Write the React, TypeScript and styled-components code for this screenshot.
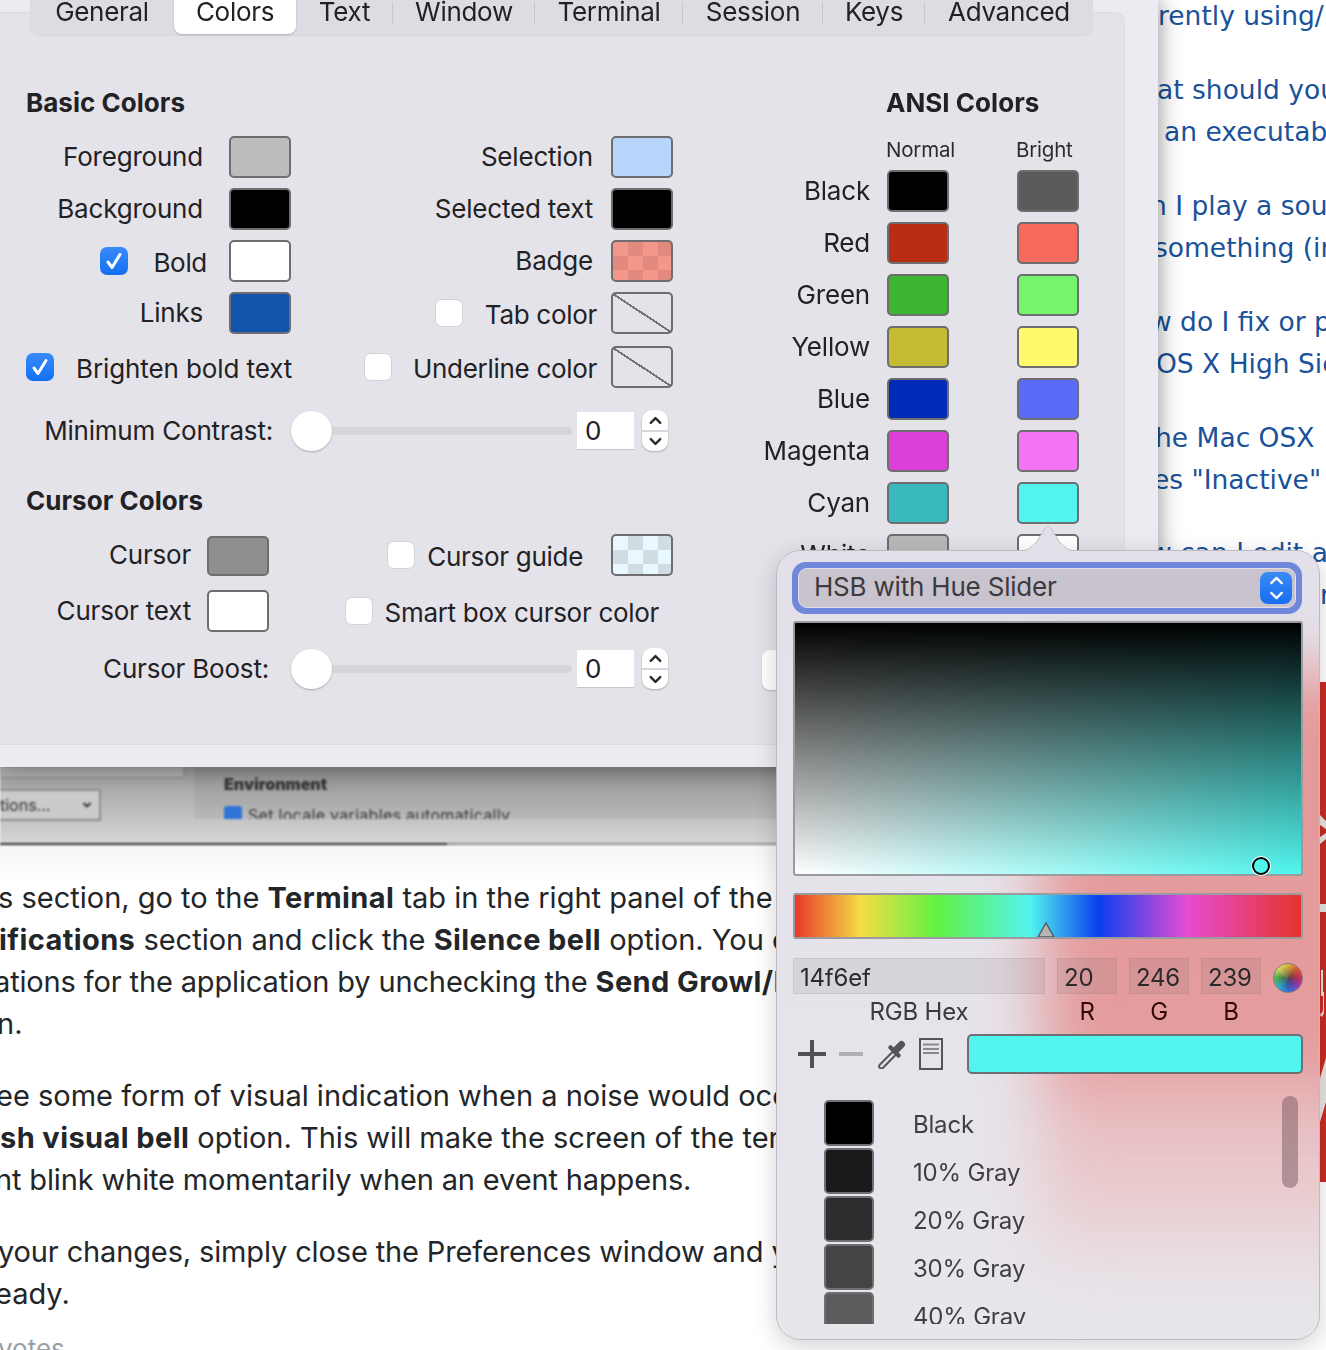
import React, { FC } from "react";
import styled, { createGlobalStyle } from "styled-components";
import { ChevronDown, ChevronUp } from "lucide-react";

const TABS = [
  { name: "General", width: 144 },
  { name: "Colors", width: 122 },
  { name: "Text", width: 97 },
  { name: "Window", width: 142 },
  { name: "Terminal", width: 148 },
  { name: "Session", width: 140 },
  { name: "Keys", width: 102 },
  { name: "Advanced", width: 168 },
];
const CHECKER_RED = "repeating-conic-gradient(#e28a7d 0 25%, #f4978a 0 50%) 0 0 / 30px 28px";
const CHECKER_ICE = "repeating-conic-gradient(#d0dde3 0 25%, #e9f8fe 0 50%) 0 0 / 30px 28px";
const NONE = "linear-gradient(to top right, transparent calc(50% - 1px), #747377 calc(50% - 1px), #747377 calc(50% + 1px), transparent calc(50% + 1px))";

const ANSI = [
  { name: "Black", normal: "#000000", bright: "#5a5a5a" },
  { name: "Red", normal: "#b92d17", bright: "#f76a5c" },
  { name: "Green", normal: "#3cb630", bright: "#76f56c" },
  { name: "Yellow", normal: "#c3bc34", bright: "#fffa6d" },
  { name: "Blue", normal: "#002bb9", bright: "#5a6cf7" },
  { name: "Magenta", normal: "#dc3fd8", bright: "#f572f2" },
  { name: "Cyan", normal: "#3ab9bd", bright: "#52f4ee" },
  { name: "White", normal: "#b9b9b9", bright: "#ffffff" },
];

const GRAYS = [
  { name: "Black", color: "#000000" },
  { name: "10% Gray", color: "#191919" },
  { name: "20% Gray", color: "#2d2d2d" },
  { name: "30% Gray", color: "#444444" },
  { name: "40% Gray", color: "#5c5c5c" },
];

const SIDE_LINKS = [
  { text: "rently using/", indent: 0, gap: 0 },
  { text: "at should you", indent: -1, gap: 32 },
  { text: "an executable", indent: 6, gap: 0 },
  { text: "n I play a sound", indent: -8, gap: 32 },
  { text: "something (in", indent: -4, gap: 0 },
  { text: "w do I fix or p", indent: -8, gap: 32 },
  { text: "OS X High Sierra", indent: -2, gap: 0 },
  { text: "he Mac OSX", indent: -3, gap: 32 },
  { text: "es \"Inactive\"", indent: -5, gap: 0 },
  { text: "w can I edit a", indent: -8, gap: 31 },
  { text: "r", indent: 162, gap: 0 },
];

const Check: FC<{ on?: boolean }> = ({ on }) => (
  <CheckBox $on={on}>
    {on && (
      <svg width="20" height="20" viewBox="0 0 20 20" fill="none">
        <path d="M4 11l4 5.500L16 3.500" stroke="#fff" strokeWidth="3" strokeLinecap="round" strokeLinejoin="round" />
      </svg>
    )}
  </CheckBox>
);

const Slider: FC<{ label: string; inset: number; top: number }> = ({ label, inset, top }) => (
  <SliderRow $top={top}>
    <SliderLabel $inset={inset}>{label}</SliderLabel>
    <SliderTrack>
      <SliderThumb />
    </SliderTrack>
    <NumberField>0</NumberField>
    <Stepper>
      <ChevronUp size={19} strokeWidth={3} color="#2a2a2c" />
      <StepperLine />
      <ChevronDown size={19} strokeWidth={3} color="#2a2a2c" />
    </Stepper>
  </SliderRow>
);

const App: FC = () => {
  return (
    <>
      <GlobalStyle />
      <Page>
        <Article>
          <ScreenStrip>
            <StripLeft>
              <StripBox />
              <StripSelect>
                tions...
                <ChevronDown size={12} strokeWidth={4} />
              </StripSelect>
            </StripLeft>
            <StripGroup>
              <strong>Environment</strong>
              <StripOption>
                <StripTick />
                Set locale variables automatically
              </StripOption>
            </StripGroup>
          </ScreenStrip>
          <Paragraph>
            <ArticleLine $indent={-2}>
              s section, go to the <b>Terminal</b> tab in the right panel of the window.
            </ArticleLine>
            <ArticleLine $indent={-1}>
              <b>ifications</b> section and click the <b>Silence bell</b> option. You can
            </ArticleLine>
            <ArticleLine $indent={-6} $tight>
              ations for the application by unchecking the <b>Send Growl/Notification</b>
            </ArticleLine>
            <ArticleLine $indent={-3}>n.</ArticleLine>
          </Paragraph>
          <Paragraph>
            <ArticleLine $indent={-4}>ee some form of visual indication when a noise would occur, select the</ArticleLine>
            <ArticleLine $indent={0}>
              <b>sh visual bell</b> option. This will make the screen of the terminal
            </ArticleLine>
            <ArticleLine $indent={-5} $tight>
              nt blink white momentarily when an event happens.
            </ArticleLine>
          </Paragraph>
          <Paragraph>
            <ArticleLine $indent={-2} $tight>
              your changes, simply close the Preferences window and your
            </ArticleLine>
            <ArticleLine $indent={-5}>eady.</ArticleLine>
          </Paragraph>
          <Votes>votes</Votes>
        </Article>

        <Sidebar>
          {SIDE_LINKS.map((l) => (
            <SideLink key={l.text} $indent={l.indent} $gap={l.gap}>
              {l.text}
            </SideLink>
          ))}
          <AdBanner>
            <svg width="6" height="500" viewBox="0 0 6 500">
              <path d="M0 133l6 6v8l-6-4zM0 155l6-4v6l-6 5zM0 222h6v8H0zM1 288h2v26H1zM0 333l3-4v-19h1v21l-2 4zM0 440l6-20v-44l-6 20z" fill="#e9e5e4" />
            </svg>
          </AdBanner>
        </Sidebar>

        <PrefsWindow>
          <Panel>
            <TabBar>
              {TABS.map((t, i) => (
                <Tab key={t.name} $width={t.width} $active={t.name === "Colors"} $sep={i >= 2 && i < 7}>
                  {t.name}
                </Tab>
              ))}
            </TabBar>
            <PanelBody>
              <LeftColumn>
                <SectionTitle>Basic Colors</SectionTitle>
                <ColorGrid>
                  <Cell>
                    <FieldLabel>Foreground</FieldLabel>
                    <Swatch $fill="#bcbcbc" />
                  </Cell>
                  <Cell>
                    <FieldLabel $gap={18}>Selection</FieldLabel>
                    <Swatch $fill="#b8d6fb" />
                  </Cell>
                  <Cell>
                    <FieldLabel>Background</FieldLabel>
                    <Swatch $fill="#000" />
                  </Cell>
                  <Cell>
                    <FieldLabel $gap={18}>Selected text</FieldLabel>
                    <Swatch $fill="#000" />
                  </Cell>
                  <Cell>
                    <Check on />
                    <FieldLabel $low $lead={25} $gap={22}>
                      Bold
                    </FieldLabel>
                    <Swatch $fill="#fff" />
                  </Cell>
                  <Cell>
                    <FieldLabel $gap={18}>Badge</FieldLabel>
                    <Swatch $fill={CHECKER_RED} />
                  </Cell>
                  <Cell>
                    <FieldLabel>Links</FieldLabel>
                    <Swatch $fill="#1254ab" />
                  </Cell>
                  <Cell>
                    <Check />
                    <FieldLabel $low $lead={22} $gap={14}>
                      Tab color
                    </FieldLabel>
                    <Swatch $fill={NONE} />
                  </Cell>
                  <LastCell $start>
                    <Check on />
                    <FieldLabel $low $loose $lead={22} $gap={0}>
                      Brighten bold text
                    </FieldLabel>
                  </LastCell>
                  <LastCell>
                    <Check />
                    <FieldLabel $low $lead={21} $gap={14}>
                      Underline color
                    </FieldLabel>
                    <Swatch $fill={NONE} />
                  </LastCell>
                </ColorGrid>
                <Slider label="Minimum Contrast:" inset={0} top={22} />
                <SectionTitle $top={35}>Cursor Colors</SectionTitle>
                <CursorGrid>
                  <Cell>
                    <FieldLabel $gap={16}>Cursor</FieldLabel>
                    <Swatch $fill="#8f8f8f" $short />
                  </Cell>
                  <Cell>
                    <Check />
                    <FieldLabel $low $lead={12} $gap={28}>
                      Cursor guide
                    </FieldLabel>
                    <Swatch $fill={CHECKER_ICE} />
                  </Cell>
                  <Cell>
                    <FieldLabel $gap={16}>Cursor text</FieldLabel>
                    <Swatch $fill="#fff" />
                  </Cell>
                  <Cell>
                    <Check />
                    <FieldLabel $low $lead={12} $gap={14}>
                      Smart box cursor color
                    </FieldLabel>
                  </Cell>
                </CursorGrid>
                <Slider label="Cursor Boost:" inset={4} top={16} />
              </LeftColumn>
              <AnsiColumn>
                <AnsiTitle>ANSI Colors</AnsiTitle>
                <AnsiHeaders>
                  <AnsiHeader>Normal</AnsiHeader>
                  <AnsiHeader>Bright</AnsiHeader>
                </AnsiHeaders>
                <AnsiGrid>
                  {ANSI.map((c) => (
                    <React.Fragment key={c.name}>
                      <AnsiLabel>{c.name}</AnsiLabel>
                      <Swatch $fill={c.normal} />
                      <Swatch $fill={c.bright} />
                    </React.Fragment>
                  ))}
                </AnsiGrid>
                <PresetsButton>Color Presets...</PresetsButton>
              </AnsiColumn>
            </PanelBody>
          </Panel>
        </PrefsWindow>

        <Picker>
          <PickerGlowClip>
            <PickerGlow />
          </PickerGlowClip>
          <PickerArrow width="58" height="27" viewBox="0 0 58 27">
            <path d="M0 26c12 0 16-7 22-16 3-5 5-9 7-9s4 4 7 9c6 9 10 16 22 16" fill="#e3e0e9" stroke="#bdbbc1" strokeWidth="1" />
            <rect x="0" y="26" width="58" height="1" fill="#e3e0e9" />
          </PickerArrow>
          <ModeRing>
            <ModeSelect>
              <ModeLabel>HSB with Hue Slider</ModeLabel>
              <ModeStepper>
                <ChevronUp size={21} strokeWidth={2.6} color="#fff" />
                <ChevronDown size={21} strokeWidth={2.6} color="#fff" />
              </ModeStepper>
            </ModeSelect>
          </ModeRing>
          <ColorField>
            <FieldCursor />
          </ColorField>
          <HueBar>
            <HueMark width="18" height="15" viewBox="0 0 18 15">
              <path d="M1 15L9 1l8 14z" fill="#b4b4b4" stroke="#58585a" strokeWidth="1.4" />
            </HueMark>
          </HueBar>
          <ValuesRow>
            <ValueColumn>
              <ValueBox>14f6ef</ValueBox>
              <ValueCaption>RGB Hex</ValueCaption>
            </ValueColumn>
            <ValueColumn>
              <ValueBox>20</ValueBox>
              <ValueCaption $tint>R</ValueCaption>
            </ValueColumn>
            <ValueColumn>
              <ValueBox>246</ValueBox>
              <ValueCaption $tint>G</ValueCaption>
            </ValueColumn>
            <ValueColumn>
              <ValueBox>239</ValueBox>
              <ValueCaption $tint>B</ValueCaption>
            </ValueColumn>
            <ColorWheel />
          </ValuesRow>
          <ToolsRow>
            <ToolIcons>
              <svg width="28" height="28" viewBox="0 0 28 28">
                <path d="M14 0v28M0 14h28" stroke="#515153" strokeWidth="4" />
              </svg>
              <svg width="24" height="28" viewBox="0 0 24 28">
                <path d="M0 14h24" stroke="#b0afb2" strokeWidth="4" />
              </svg>
              <svg width="30" height="30" viewBox="0 0 30 30" fill="none" strokeLinecap="round" stroke="#555557">
                <path d="M18 11.500L4 25.500c-1.500 1.500-1 2.800 0 3.500s2.300 .5 3.300-.5L20 15.500" strokeWidth="2" />
                <path d="M14.500 8.500L22.500 16.500" strokeWidth="4.500" />
                <path d="M19.500 11.500L25.500 5.500" strokeWidth="7" />
              </svg>
              <svg width="24" height="32" viewBox="0 0 24 32">
                <rect x="1" y="1" width="22" height="30" fill="none" stroke="#555557" strokeWidth="2" />
                <path d="M4 6.500h16M4 11h16M4 15h16" stroke="#8a898c" strokeWidth="2" />
              </svg>
            </ToolIcons>
            <CurrentColor />
          </ToolsRow>
          <PaletteList>
            {GRAYS.map((g) => (
              <PaletteRow key={g.name}>
                <PaletteChip $fill={g.color} />
                <PaletteName>{g.name}</PaletteName>
              </PaletteRow>
            ))}
          </PaletteList>
          <PaletteScroll />
        </Picker>
      </Page>
    </>
  );
};

export default App;

const GlobalStyle = createGlobalStyle`
  html, body {
    margin: 0;
    padding: 0;
    background: #fff;
    overflow: hidden;
  }
  #root {
    height: 1350px;
  }
`;

const Page = styled.div`
  position: relative;
  display: flex;
  width: 1326px;
  height: 1350px;
  overflow: hidden;
  background: #fff;
  font-family: Inter, "Liberation Sans", sans-serif;
`;

// ---- page behind the windows ----

const Article = styled.main`
  flex: 0 0 1158px;
  overflow: hidden;
  color: #232629;
  font-size: 29px;
  line-height: 42px;
  background: linear-gradient(#f6f6f6, #fff) 0 845px / 100% 40px no-repeat;

  b {
    letter-spacing: 0.4px;
  }
`;
const ScreenStrip = styled.div`
  display: flex;
  align-items: flex-start;
  gap: 10px;
  height: 845px;
  padding-top: 767px;
  box-sizing: border-box;
  background: linear-gradient(to bottom, #9a9a9a 767px, #d6d6d6 842px);
  border-bottom: 2px solid;
  border-image: linear-gradient(to right, #2a2a2a 447px, #8c8c8c 447px) 1;
  font-size: 16px;
  line-height: 20px;
  color: #333;
  filter: blur(0.9px);
`;
const StripLeft = styled.div`
  flex: 0 0 184px;
`;
const StripBox = styled.div`
  height: 10px;
  background: #b2b2b2;
  border: 1px solid #8c8c8c;
  border-top: none;
`;
const StripSelect = styled.div`
  display: flex;
  align-items: center;
  justify-content: space-between;
  box-sizing: border-box;
  width: 101px;
  height: 32px;
  margin-top: 11px;
  padding: 0 6px 0 0;
  background: #cbcbcb;
  border: 2px solid #8e8e8e;
  border-left: none;
`;
const StripGroup = styled.div`
  flex: 0 0 800px;
  box-sizing: border-box;
  height: 52px;
  padding: 7px 0 0 30px;
  overflow: hidden;
  background: rgba(0, 0, 0, 0.05);
  font-weight: 700;
`;
const StripOption = styled.div`
  display: flex;
  align-items: center;
  gap: 6px;
  margin-top: 11px;
  font-weight: 400;
  letter-spacing: 0.3px;
`;
const StripTick = styled.span`
  width: 18px;
  height: 18px;
  border-radius: 3px;
  background: #2f73d9;
`;
const Paragraph = styled.p`
  margin: 32px 0 30px;
  white-space: nowrap;

  & + & {
    margin-top: 30px;
  }
`;
const ArticleLine = styled.span<{ $indent: number; $tight?: boolean }>`
  display: block;
  margin-left: ${(p) => p.$indent}px;
  letter-spacing: ${(p) => (p.$tight ? "-0.14px" : "0")};
`;
const Votes = styled.div`
  margin: -8px 0 0 -2px;
  color: #9aa0a6;
  font-size: 26px;
  line-height: 24px;
`;

const Sidebar = styled.aside`
  flex: 1;
  min-width: 0;
  margin-top: -5px;
  overflow: hidden;
  color: #1a5299;
  font-family: "DejaVu Sans", sans-serif;
  font-size: 26.5px;
  line-height: 42px;
`;
const SideLink = styled.div<{ $indent: number; $gap: number }>`
  margin-top: ${(p) => p.$gap}px;
  margin-left: ${(p) => p.$indent}px;
  white-space: nowrap;
`;
const AdBanner = styled.div`
  display: flex;
  justify-content: flex-end;
  height: 500px;
  margin-top: 66px;
  background: #c82d24;
`;

// ---- preferences window ----

const PrefsWindow = styled.section`
  position: absolute;
  left: 0;
  top: 0;
  width: 1158px;
  height: 767px;
  background: #ecebf2;
  box-shadow: 0 0 22px rgba(0, 0, 0, 0.45);
  color: #222224;
  font-size: 26px;
  letter-spacing: -0.2px;
`;
const Panel = styled.div`
  box-sizing: border-box;
  width: 1125px;
  height: 733px;
  margin-top: 12px;
  background: #e5e3ea;
  border: 1px solid #dddbe2;
  border-left: none;
  border-radius: 0 10px 10px 0;
`;
const TabBar = styled.nav`
  display: flex;
  align-items: flex-start;
  box-sizing: border-box;
  width: 1063px;
  height: 45px;
  margin: -23px 0 0 30px;
  background: #dedce3;
  border-radius: 10px;
  box-shadow: 0 1px 1px rgba(0, 0, 0, 0.06);
  letter-spacing: -0.3px;
`;
const Tab = styled.div<{ $width: number; $active?: boolean; $sep?: boolean }>`
  position: relative;
  flex: 0 0 ${(p) => p.$width}px;
  height: 44px;
  border-radius: 8px;
  text-align: center;
  line-height: 44px;
  background: ${(p) => (p.$active ? "#fff" : "transparent")};
  box-shadow: ${(p) => (p.$active ? "0 1px 2px rgba(0,0,0,.2)" : "none")};

  &::after {
    content: "";
    display: ${(p) => (p.$sep ? "block" : "none")};
    position: absolute;
    right: 0;
    top: 12px;
    width: 1px;
    height: 22px;
    background: #c9c7ce;
  }
`;
const PanelBody = styled.div`
  display: flex;
`;
const LeftColumn = styled.div`
  flex: 0 0 673px;
`;
const SectionTitle = styled.h2<{ $top?: number }>`
  margin: ${(p) => p.$top ?? 52}px 0 0 26px;
  font-size: 26px;
  font-weight: 700;
  letter-spacing: 0.03px;
  line-height: 32px;
`;
const ColorGrid = styled.div`
  display: grid;
  grid-template-columns: 291px 382px;
  grid-template-rows: 42px 42px 42px 42px 44px;
  row-gap: 10px;
  margin-top: 17px;
`;
const Cell = styled.div`
  display: flex;
  align-items: center;
  justify-content: flex-end;
  white-space: nowrap;
`;
const LastCell = styled(Cell)<{ $start?: boolean }>`
  box-sizing: border-box;
  padding: 2px 0 0 ${(p) => (p.$start ? 26 : 0)}px;
  justify-content: ${(p) => (p.$start ? "flex-start" : "flex-end")};
`;
const FieldLabel = styled.span<{ $gap?: number; $lead?: number; $low?: boolean; $loose?: boolean }>`
  margin-left: ${(p) => p.$lead ?? 0}px;
  margin-right: ${(p) => p.$gap ?? 26}px;
  margin-top: ${(p) => (p.$low ? 2 : 0)}px;
  margin-bottom: ${(p) => (p.$low ? 0 : 2)}px;
  letter-spacing: ${(p) => (p.$loose ? "-0.1px" : p.$low ? "-0.3px" : "-0.2px")};
`;
const Swatch = styled.div<{ $fill: string; $short?: boolean }>`
  flex: none;
  box-sizing: border-box;
  width: 62px;
  height: ${(p) => (p.$short ? 40 : 42)}px;
  margin-top: ${(p) => (p.$short ? 2 : 0)}px;
  background: ${(p) => p.$fill};
  border: 2px solid #6e6d70;
  border-radius: 5px;
`;
const CheckBox = styled.div<{ $on?: boolean }>`
  display: flex;
  flex: none;
  align-items: center;
  justify-content: center;
  box-sizing: border-box;
  width: 28px;
  height: 28px;
  background: ${(p) => (p.$on ? "linear-gradient(#3a8bfb, #136ff2)" : "#fff")};
  border: ${(p) => (p.$on ? "none" : "1px solid #d4d2d8")};
  border-radius: 7px;
`;
const SliderRow = styled.div<{ $top: number }>`
  display: grid;
  grid-template-columns: 291px 281px 57px 36px;
  align-items: center;
  height: 40px;
  margin-top: ${(p) => p.$top}px;
`;
const SliderLabel = styled.div<{ $inset: number }>`
  padding-right: ${(p) => 18 + p.$inset}px;
  text-align: right;
  white-space: nowrap;
`;
const SliderTrack = styled.div`
  position: relative;
  height: 8px;
  background: #d7d5db;
  border-radius: 4px;
`;
const SliderThumb = styled.div`
  position: absolute;
  left: 0;
  top: -16px;
  width: 41px;
  height: 40px;
  background: #fff;
  border-radius: 50%;
  box-shadow: 0 1px 2px rgba(0, 0, 0, 0.25);
`;
const NumberField = styled.div`
  margin-left: 5px;
  box-sizing: border-box;
  width: 57px;
  height: 38px;
  padding-left: 8px;
  background: #fff;
  border-bottom: 1px solid #c9c7cc;
  line-height: 38px;
`;
const Stepper = styled.div`
  display: flex;
  flex-direction: column;
  align-items: center;
  justify-content: center;
  box-sizing: border-box;
  width: 26px;
  height: 41px;
  margin-left: 13px;
  background: #fff;
  border-radius: 10px;
  box-shadow: 0 1px 2px rgba(0, 0, 0, 0.25);
`;
const StepperLine = styled.div`
  flex: none;
  width: 100%;
  height: 2px;
  background: #dad8de;
`;
const CursorGrid = styled.div`
  display: grid;
  grid-template-columns: 269px 404px;
  grid-template-rows: 42px 42px;
  row-gap: 14px;
  margin-top: 17px;
`;
const AnsiColumn = styled.div`
  flex: 1;
`;
const AnsiTitle = styled.h2`
  margin: 52px 0 0 213px;
  font-size: 26px;
  font-weight: 700;
  letter-spacing: 0.03px;
  line-height: 32px;
  white-space: nowrap;
`;
const AnsiHeaders = styled.div`
  display: grid;
  grid-template-columns: 130px 62px;
  margin: 19px 0 0 213px;
`;
const AnsiHeader = styled.div`
  font-size: 20.5px;
  line-height: 24px;
  color: #2c2c2e;
`;
const AnsiGrid = styled.div`
  display: grid;
  grid-template-columns: 214px 130px 62px;
  grid-auto-rows: 42px;
  row-gap: 10px;
  margin-top: 8px;
`;
const AnsiLabel = styled.div`
  padding-right: 17px;
  text-align: right;
  line-height: 42px;
`;
const PresetsButton = styled.div`
  margin: 74px 0 0 89px;
  width: 300px;
  height: 40px;
  padding-left: 30px;
  background: #fff;
  border-radius: 8px;
  line-height: 40px;
  box-shadow: 0 1px 2px rgba(0, 0, 0, 0.2);
`;

// ---- colour picker popover ----

const Picker = styled.section`
  position: absolute;
  z-index: 1;
  left: 776px;
  top: 550px;
  box-sizing: border-box;
  width: 544px;
  height: 790px;
  padding: 11px 16px 0;
  background: linear-gradient(#e3e0e9, #e8e6eb);
  border: 1px solid #bdbbc1;
  border-radius: 24px;
  box-shadow: 0 6px 24px rgba(0, 0, 0, 0.18);
  color: #3c3a3e;
  font-size: 26px;
  letter-spacing: -0.2px;
`;
const PickerGlowClip = styled.div`
  position: absolute;
  z-index: -1;
  inset: 0;
  overflow: hidden;
  border-radius: 23px;
`;
const PickerGlow = styled.div`
  position: absolute;
  left: 264px;
  top: 122px;
  width: 420px;
  height: 610px;
  background: linear-gradient(#e4999a 0, #e49c9d 63%, #e8bcbf 71%, #e9cdd0 87%, rgba(232, 230, 235, 0) 100%);
  filter: blur(30px);
`;
const PickerArrow = styled.svg`
  position: absolute;
  left: 242px;
  top: -26px;
`;
const ModeRing = styled.div`
  box-sizing: border-box;
  width: 510px;
  height: 52px;
  margin-left: -1px;
  padding: 6px;
  background: #7087dc;
  border-radius: 14px;
`;
const ModeSelect = styled.div`
  display: flex;
  align-items: center;
  justify-content: space-between;
  height: 40px;
  padding: 0 3px 0 15px;
  background: #c8c3cc;
  border: 1px solid #e3e0e6;
  border-radius: 9px;
  box-sizing: border-box;
`;
const ModeLabel = styled.span`
  margin-bottom: 3px;
`;
const ModeStepper = styled.div`
  display: flex;
  flex-direction: column;
  align-items: center;
  justify-content: center;
  width: 32px;
  height: 32px;
  background: linear-gradient(#3a8bf6, #166df0);
  border-radius: 8px;

  svg {
    margin: -3px 0;
  }
`;
const ColorField = styled.div`
  position: relative;
  box-sizing: border-box;
  width: 510px;
  height: 255px;
  margin-top: 7px;
  background:
    linear-gradient(to bottom, #000, rgba(0, 0, 0, 0)),
    linear-gradient(to right, #fff, #50f5ee);
  border: 2px solid #9b9a9e;
  border-radius: 3px;
`;
const FieldCursor = styled.div`
  position: absolute;
  left: 457px;
  top: 234px;
  box-sizing: border-box;
  width: 18px;
  height: 18px;
  background: #52f4ee;
  border: 2.500px solid #000;
  border-radius: 50%;
  box-shadow: 0 0 0 1px #fff;
`;
const HueBar = styled.div`
  position: relative;
  box-sizing: border-box;
  width: 510px;
  height: 46px;
  margin-top: 17px;
  background: linear-gradient(to right, #e8392a 0, #f5dc45 13%, #62f242 28%, #52f4ee 46.500%, #0a3ff0 60%, #e64bd2 77.500%, #e5352c 100%);
  border: 2px solid #9b9a9e;
  border-radius: 3px;
`;
const HueMark = styled.svg`
  position: absolute;
  left: 242px;
  bottom: 0;
`;
const ValuesRow = styled.div`
  display: grid;
  grid-template-columns: 252px 60px 60px 60px 30px;
  column-gap: 12px;
  margin-top: 19px;
`;
const ValueColumn = styled.div`
  display: flex;
  flex-direction: column;
  align-items: stretch;
`;
const ValueBox = styled.div`
  box-sizing: border-box;
  height: 36px;
  padding-left: 6px;
  background: rgba(90, 80, 90, 0.1);
  border: 1px solid rgba(90, 80, 90, 0.1);
  color: #2c2a2c;
  font-size: 24px;
  line-height: 38px;
`;
const ValueCaption = styled.div<{ $tint?: boolean }>`
  margin-top: 3px;
  color: ${(p) => (p.$tint ? "#330808" : "#3c3a3e")};
  font-size: 24px;
  line-height: 30px;
  text-align: center;
`;
const ColorWheel = styled.div`
  position: relative;
  width: 30px;
  height: 30px;
  margin-top: 5px;
  background:
    radial-gradient(circle, rgba(60, 60, 70, 0.75) 0, rgba(60, 60, 70, 0) 70%),
    conic-gradient(#e8c23a, #e65a2c, #d92b5e, #8a3fc9, #2d6ee0, #2fb6d9, #4cc24c, #e8e05a, #e8c23a);
  border: 1px solid #7a787c;
  border-radius: 50%;
  box-sizing: border-box;
`;
const ToolsRow = styled.div`
  display: flex;
  align-items: center;
  justify-content: space-between;
  margin-top: 7px;
`;
const ToolIcons = styled.div`
  display: flex;
  align-items: center;
  gap: 13px;
  margin-left: 5px;
`;
const CurrentColor = styled.div`
  box-sizing: border-box;
  width: 336px;
  height: 40px;
  background: #52f4ee;
  border: 2px solid #6f6e72;
  border-radius: 5px;
`;
const PaletteList = styled.div`
  height: 225px;
  margin-top: 25px;
  overflow: hidden;
`;
const PaletteRow = styled.div`
  display: flex;
  align-items: center;
  gap: 39px;
  height: 48px;
  padding-left: 31px;
`;
const PaletteChip = styled.div<{ $fill: string }>`
  box-sizing: border-box;
  width: 50px;
  height: 46px;
  background: ${(p) => p.$fill};
  border: 2px solid #6f6e72;
  border-radius: 5px;
`;
const PaletteName = styled.div`
  margin-top: 2px;
  color: #403e42;
  font-size: 24px;
`;
const PaletteScroll = styled.div`
  position: absolute;
  right: 21px;
  top: 545px;
  width: 16px;
  height: 92px;
  background: rgba(120, 90, 95, 0.5);
  border-radius: 8px;
`;
